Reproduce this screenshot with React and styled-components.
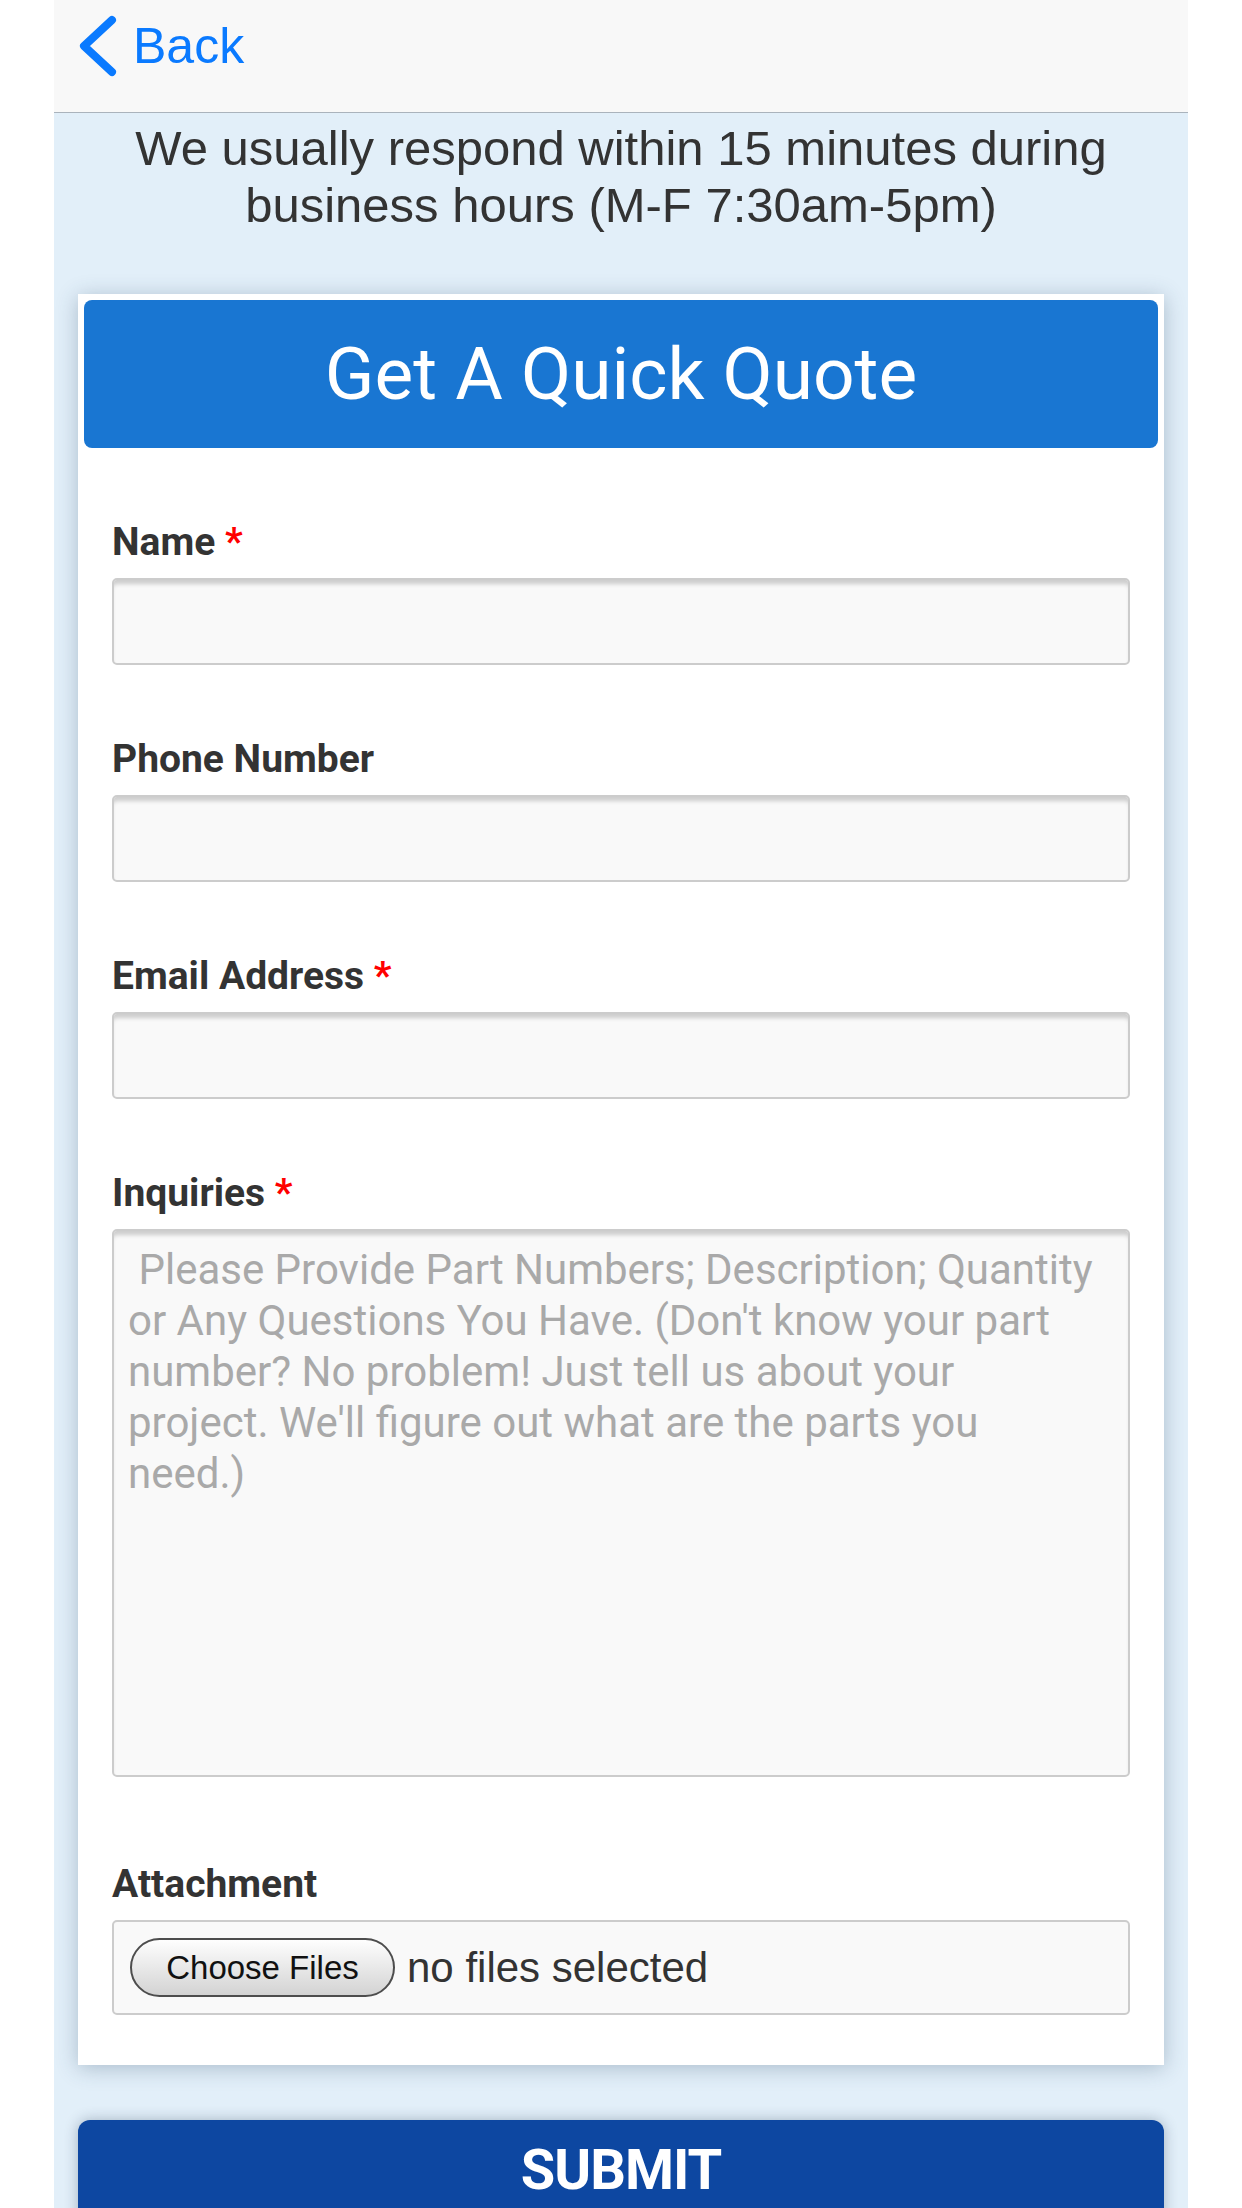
import React from 'react';
import styled, { createGlobalStyle } from 'styled-components';

const GlobalStyle = createGlobalStyle`
  html, body {
    margin: 0;
    padding: 0;
    background: #ffffff;
  }
  body {
    font-family: Roboto, "Liberation Sans", Arial, sans-serif;
  }
  * { box-sizing: border-box; }
`;

const Page = styled.div`
  width: 1134px;
  min-height: 100vh;
  margin: 0 auto;
  background: #e2eff9;
`;

const TopBar = styled.header`
  height: 113px;
  padding: 14px 0 0 24px;
  background: #f8f8f8;
  border-bottom: 1px solid #aab3bc;
`;

const BackLink = styled.a`
  display: inline-flex;
  align-items: center;
  gap: 15px;
  color: #0a7aff;
  text-decoration: none;
  font-family: "Liberation Sans", Arial, sans-serif;
  font-size: 50px;
  line-height: 57px;
`;

const Note = styled.p`
  margin: 0;
  padding: 7px 40px 0;
  font-family: "Liberation Sans", Arial, sans-serif;
  font-size: 49px;
  line-height: 57px;
  color: #333333;
  text-align: center;
`;

const Card = styled.section`
  margin: 60px 24px 0;
  padding: 6px 6px 50px;
  background: #ffffff;
  box-shadow: 0 3px 20px rgba(40, 70, 100, 0.3);
`;

const CardTitle = styled.h2`
  margin: 0;
  height: 148px;
  display: flex;
  align-items: center;
  justify-content: center;
  border-radius: 8px;
  background: #1976d2;
  color: #ffffff;
  font-family: Roboto, sans-serif;
  font-weight: 400;
  font-size: 73px;
`;

const FormBody = styled.div`
  padding: 0 28px;
`;

const Field = styled.div`
  margin-top: ${p => p.$top || 71}px;
`;

const Label = styled.label`
  display: block;
  margin-bottom: 13px;
  font-family: Roboto, sans-serif;
  font-weight: 700;
  font-size: 39px;
  line-height: 46px;
  color: #333333;
`;

const Req = styled.span`
  color: #ff0000;
`;

const TextInput = styled.input`
  display: block;
  width: 100%;
  height: 87px;
  padding: 0 14px;
  border: 2px solid #cccccc;
  border-radius: 5px;
  background: #f9f9f9;
  box-shadow: inset 0 6px 4px -2px rgba(0, 0, 0, 0.18);
  font-family: Roboto, sans-serif;
  font-size: 42px;
  color: #333333;
  outline: none;
`;

const TextArea = styled.textarea`
  display: block;
  width: 100%;
  height: 548px;
  padding: 13px 26px 13px 14px;
  border: 2px solid #cccccc;
  border-radius: 5px;
  background: #f9f9f9;
  box-shadow: inset 0 6px 4px -2px rgba(0, 0, 0, 0.18);
  font-family: Roboto, sans-serif;
  font-size: 42px;
  line-height: 51px;
  color: #333333;
  resize: none;
  outline: none;

  &::placeholder {
    color: #a9a9a9;
  }
`;

const FileBox = styled.label`
  display: flex;
  align-items: center;
  gap: 12px;
  height: 95px;
  padding-left: 16px;
  border: 2px solid #cccccc;
  border-radius: 5px;
  background: #f9f9f9;

  input { display: none; }
`;

const ChooseButton = styled.span`
  display: flex;
  align-items: center;
  justify-content: center;
  width: 265px;
  height: 59px;
  border: 2px solid #4d4d4d;
  border-radius: 30px;
  background: linear-gradient(#fefefe, #d3d3d3);
  font-family: "Liberation Sans", Arial, sans-serif;
  font-size: 33px;
  color: #111111;
`;

const FileText = styled.span`
  font-family: "Liberation Sans", Arial, sans-serif;
  font-size: 42px;
  color: #333333;
`;

const SubmitButton = styled.button`
  display: block;
  width: calc(100% - 48px);
  margin: 55px 24px 0;
  padding: 22px 0 44px;
  border: none;
  border-radius: 12px;
  background: #0d47a1;
  box-shadow: 0 0 14px rgba(20, 40, 70, 0.3);
  color: #ffffff;
  font-family: Roboto, sans-serif;
  font-weight: 700;
  font-size: 56px;
  line-height: 56px;
  letter-spacing: -1px;
`;

const Chevron = () => (
  <svg width="40" height="64" viewBox="0 0 40 64" fill="none">
    <path d="M34 6 L6 32 L34 58" stroke="#0a7aff" strokeWidth="8" strokeLinecap="round" strokeLinejoin="round" />
  </svg>
);

const placeholder = [
  ' Please Provide Part Numbers; Description; Quantity',
  "or Any Questions You Have. (Don't know your part",
  'number? No problem! Just tell us about your',
  "project. We'll figure out what are the parts you",
  'need.)',
].join('\n');

const App = () => {
  return (
    <Page>
      <GlobalStyle />
      <TopBar>
        <BackLink href="#">
          <Chevron />
          Back
        </BackLink>
      </TopBar>

      <Note>We usually respond within 15 minutes during business hours (M-F 7:30am-5pm)</Note>

      <Card>
        <CardTitle>Get A Quick Quote</CardTitle>
        <FormBody>
          <Field>
            <Label>Name <Req>*</Req></Label>
            <TextInput type="text" />
          </Field>
          <Field>
            <Label>Phone Number</Label>
            <TextInput type="tel" />
          </Field>
          <Field>
            <Label>Email Address <Req>*</Req></Label>
            <TextInput type="email" />
          </Field>
          <Field>
            <Label>Inquiries <Req>*</Req></Label>
            <TextArea placeholder={placeholder} />
          </Field>
          <Field $top={84}>
            <Label>Attachment</Label>
            <FileBox>
              <input type="file" multiple />
              <ChooseButton>Choose Files</ChooseButton>
              <FileText>no files selected</FileText>
            </FileBox>
          </Field>
        </FormBody>
      </Card>

      <SubmitButton type="button">SUBMIT</SubmitButton>
    </Page>
  );
};

export default App;
